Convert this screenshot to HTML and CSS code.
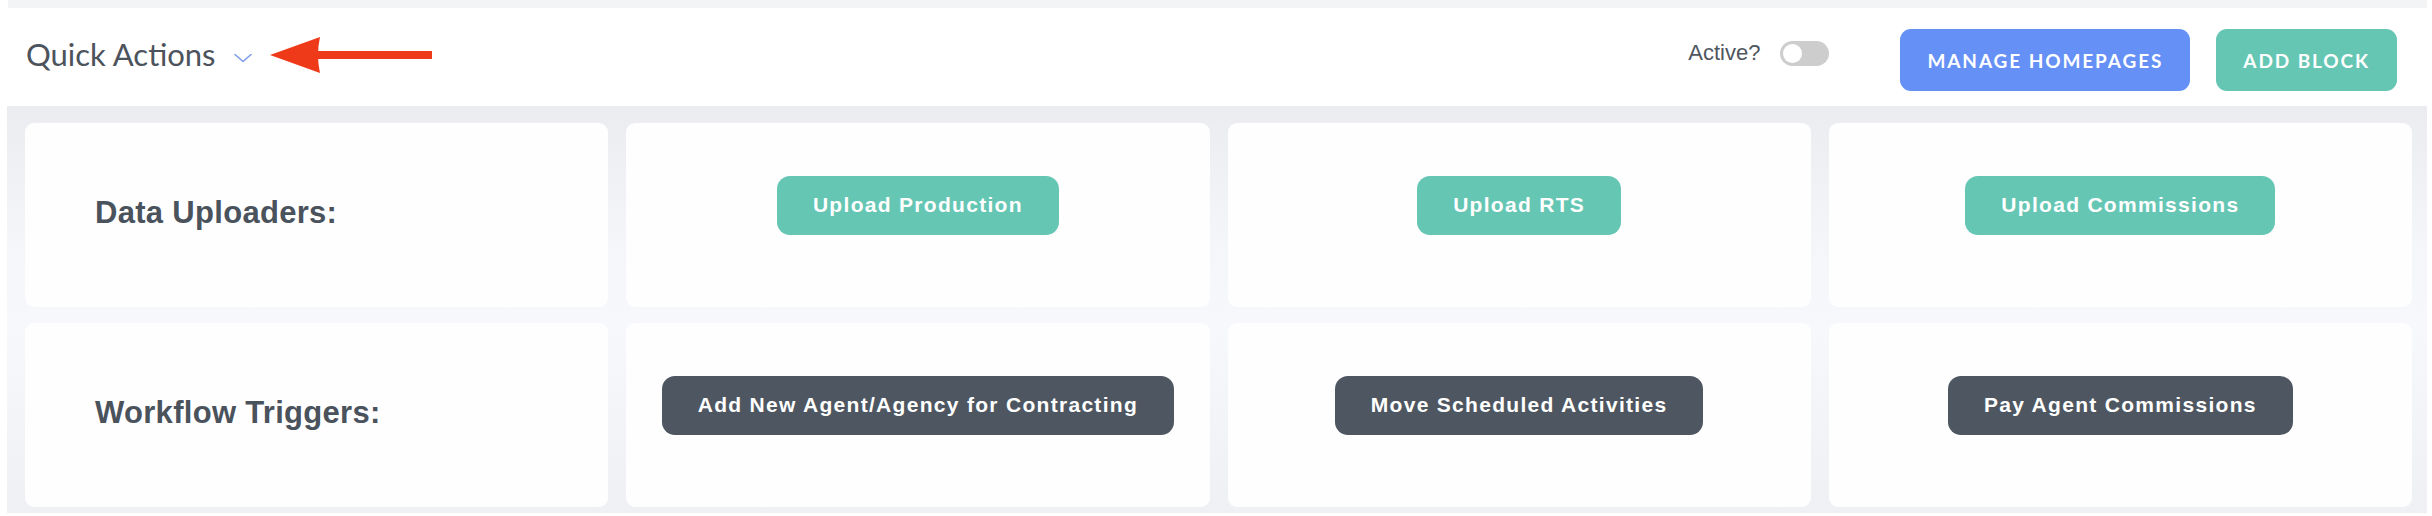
FILE: index.html
```html
<!DOCTYPE html>
<html lang="en">
<head>
<meta charset="utf-8">
<title>Quick Actions</title>
<link rel="stylesheet" href="styles.css">
</head>
<body>
<div class="page">
  <header class="bar">
    <div class="title-group">
      <h1 class="title">Quick Actions</h1>
      <svg class="chevron" width="18" height="10" viewBox="0 0 18 10" aria-hidden="true">
        <path d="M1 1.5 L9 8.5 L17 1.5" fill="none" stroke="#7b9be8" stroke-width="1.6" stroke-linecap="round" stroke-linejoin="round"/>
      </svg>
      <svg class="pointer" width="162" height="36" viewBox="0 0 162 36" aria-hidden="true">
        <path d="M0 18 L50 0 Q46 18 50 36 Z" fill="#ef3a19"/>
        <rect x="48" y="14" width="114" height="8" fill="#ef3a19"/>
      </svg>
    </div>
    <div class="actions">
      <span class="active-label">Active?</span>
      <span class="toggle"><span class="knob"></span></span>
      <button class="btn btn-blue">MANAGE HOMEPAGES</button>
      <button class="btn btn-teal">ADD BLOCK</button>
    </div>
  </header>
  <main class="grid">
    <div class="card card-label"><span class="label">Data Uploaders:</span></div>
    <div class="card card-action"><button class="action action-teal">Upload Production</button></div>
    <div class="card card-action"><button class="action action-teal">Upload RTS</button></div>
    <div class="card card-action"><button class="action action-teal">Upload Commissions</button></div>
    <div class="card card-label"><span class="label">Workflow Triggers:</span></div>
    <div class="card card-action"><button class="action action-dark">Add New Agent/Agency for Contracting</button></div>
    <div class="card card-action"><button class="action action-dark">Move Scheduled Activities</button></div>
    <div class="card card-action"><button class="action action-dark">Pay Agent Commissions</button></div>
  </main>
</div>
</body>
</html>
```

FILE: styles.css
```css
* { box-sizing: border-box; }

html, body {
  margin: 0;
  padding: 0;
  background: #ffffff;
}

body {
  width: 2432px;
  height: 516px;
  overflow: hidden;
  font-family: "Liberation Sans", Arial, sans-serif;
}

.page {
  margin: 0 5px 0 7px;
}

.bar {
  height: 106px;
  border-top: 8px solid #f3f4f6;
  margin-left: 1px;
  display: flex;
  align-items: center;
  justify-content: space-between;
  padding: 0 30px 0 18px;
  background: #ffffff;
}

.title-group {
  display: flex;
  align-items: center;
}

.title {
  margin: 0;
  font-family: "Lato", "Open Sans", sans-serif;
  font-weight: 400;
  font-size: 31px;
  color: #4c535c;
  line-height: 1;
  margin-top: -6px;
}

.chevron {
  margin-left: 18px;
  margin-top: 2px;
}

.pointer {
  margin-left: 18px;
  margin-top: -4px;
}

.actions {
  display: flex;
  align-items: center;
}

.active-label {
  font-family: "Liberation Sans", Arial, sans-serif;
  font-size: 22px;
  color: #4f565e;
  margin-top: -8px;
}

.toggle {
  width: 49px;
  height: 25px;
  border-radius: 13px;
  background: #cdcdcd;
  margin-left: 20px;
  margin-right: 71px;
  margin-top: -8px;
  display: flex;
  align-items: center;
  padding-left: 3px;
}

.knob {
  width: 19px;
  height: 19px;
  border-radius: 50%;
  background: #ffffff;
}

.btn {
  height: 62px;
  border: none;
  border-radius: 11px;
  padding: 0 27px;
  font-family: "Lato", "Liberation Sans", sans-serif;
  font-weight: 700;
  font-size: 19px;
  letter-spacing: 1.9px;
  color: #ffffff;
  margin-top: 6px;
}

.btn-blue {
  background: #6590f6;
  margin-right: 26px;
}

.btn-teal {
  background: #66c6b4;
}

.grid {
  display: grid;
  grid-template-columns: repeat(4, 1fr);
  grid-template-rows: 184px 184px;
  gap: 16px 18px;
  padding: 17px 15px 6px 18px;
  background: linear-gradient(180deg, #ebecf0 0%, #f5f6fa 35%, #f7f8fc 55%, #eff0f4 100%);
}

.card {
  background: #fefeff;
  border-radius: 9px;
  display: flex;
  align-items: center;
}

.card-label {
  padding: 0 0 5px 70px;
}

.label {
  font-family: "Liberation Sans", Arial, sans-serif;
  font-weight: 700;
  font-size: 31px;
  letter-spacing: 0.3px;
  color: #4a525c;
}

.card-action {
  justify-content: center;
  padding-bottom: 20px;
}

.action {
  height: 59px;
  border: none;
  border-radius: 13px;
  padding: 0 36px;
  font-family: "Liberation Sans", Arial, sans-serif;
  font-weight: 700;
  font-size: 21px;
  letter-spacing: 1.3px;
  color: #ffffff;
}

.action-teal {
  background: #65c6b4;
}

.action-dark {
  background: #4e5761;
}
```
